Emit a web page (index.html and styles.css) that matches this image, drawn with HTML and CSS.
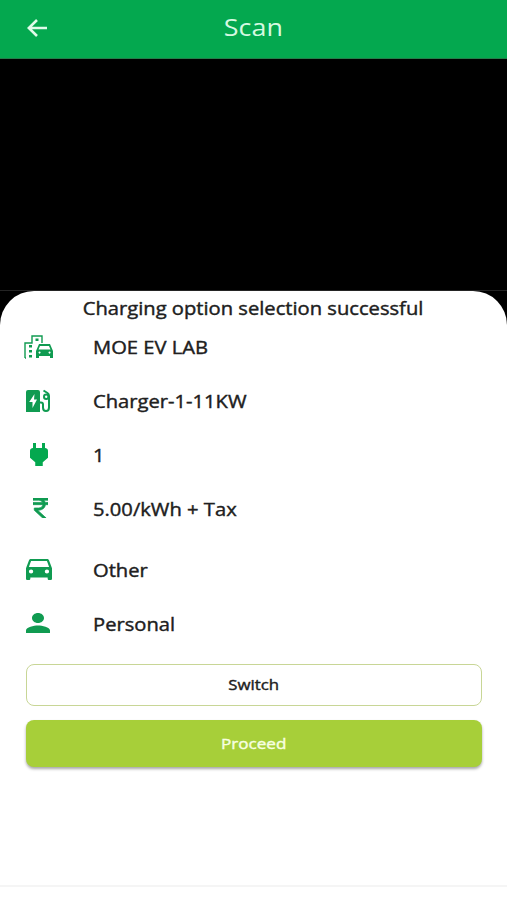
FILE: index.html
```html
<!DOCTYPE html>
<html lang="en">
<head>
<meta charset="utf-8">
<title>Scan</title>
<link rel="stylesheet" href="styles.css">
</head>
<body>
<div class="screen">
  <header class="bar">
    <svg class="back" viewBox="0 0 21 18"><path d="M20 9H2M10 1L1.8 9L10 17"/></svg>
    <h1 class="wide">Scan</h1>
  </header>
  <div class="camera"></div>
  <main class="sheet">
    <h2><span class="wide">Charging option selection successful</span></h2>
    <ul class="details">
      <li>
        <svg class="icon station" viewBox="0 0 29 24" preserveAspectRatio="none">
          <path class="line" d="M1 23V8H8V1H18V8M1 23H2"/>
          <path d="M5 10h3v2.6H5zM5 15h3v2.6H5zM5 20h3v2.6H5zM11.5 3.5h3v2.5h-3z"/>
          <path fill-rule="evenodd" d="M15 9H26L29 16V23H26V21H15V23H12V16ZM16 11L14.5 14.5H26.5L25 11ZM15.5 16.5a1 1 0 1 0 .1 0ZM25.5 16.5a1 1 0 1 0 .1 0Z"/>
        </svg>
        <span class="wide">MOE EV LAB</span>
      </li>
      <li>
        <svg class="icon charger" viewBox="0 0 25 24" preserveAspectRatio="none">
          <path fill-rule="evenodd" d="M2 1H12Q14 1 14 3V23H0V3Q0 1 2 1ZM8.5 5L3.2 13H6.5V19L11 10.5H8Z"/>
          <path class="hose" d="M14 13.5H15Q17 13.5 17 15.5V18.5Q17 22 20 22T23 18.5V7Q23 5 21.5 4L17.5 1.5"/>
          <circle class="hose" cx="20.2" cy="7.8" r="2.2"/>
        </svg>
        <span class="wide">Charger-1-11KW</span>
      </li>
      <li>
        <svg class="icon plug" viewBox="6 3 12 18" preserveAspectRatio="none"><path d="M16.01 7L16 3h-2v4h-4V3H8v4h-.01C7 6.99 6 7.99 6 8.99v5.49L9.5 18v3h5v-3l3.5-3.51v-5.5c0-1-1-2-1.99-1.99z"/></svg>
        <span class="wide">1</span>
      </li>
      <li>
        <svg class="icon rupee" viewBox="6 3 12 18" preserveAspectRatio="none"><path d="M13.66 7C13.1 5.82 11.9 5 10.5 5H6V3h12v2h-3.26c.48.58.84 1.26 1.05 2H18v2h-2.02c-.25 2.8-2.61 5-5.48 5h-.73l6.73 7h-2.77L7 14v-2h3.5c1.76 0 3.22-1.3 3.46-3H6V7h7.66z"/></svg>
        <span class="wide">5.00/kWh + Tax</span>
      </li>
      <li class="vehicle">
        <svg class="icon car" viewBox="3 5 18 16" preserveAspectRatio="none"><path fill-rule="evenodd" d="M18.92 6.01C18.72 5.42 18.16 5 17.5 5h-11c-.66 0-1.21.42-1.42 1.01L3 12v8c0 .55.45 1 1 1h1c.55 0 1-.45 1-1v-1h12v1c0 .55.45 1 1 1h1c.55 0 1-.45 1-1v-8l-2.08-5.99zM6.5 16a1.5 1.5 0 1 1 0-3 1.5 1.5 0 0 1 0 3zM17.5 16a1.5 1.5 0 1 1 0-3 1.5 1.5 0 0 1 0 3zM5 11l1.5-4.5h11L19 11H5z"/></svg>
        <span class="wide">Other</span>
      </li>
      <li>
        <svg class="icon person" viewBox="4 4 16 16" preserveAspectRatio="none"><path d="M12 12c2.21 0 4-1.79 4-4s-1.79-4-4-4-4 1.79-4 4 1.79 4 4 4zm0 2c-2.67 0-8 1.34-8 4v2h16v-2c0-2.66-5.33-4-8-4z"/></svg>
        <span class="wide">Personal</span>
      </li>
    </ul>
    <div class="actions">
      <button class="switch"><span class="wide">Switch</span></button>
      <button class="proceed"><span class="wide">Proceed</span></button>
    </div>
  </main>
  <footer class="foot"></footer>
</div>
</body>
</html>
```
FILE: styles.css
```css
* { box-sizing: border-box; }
body { margin: 0; background: #000; font-family: "Open Sans", sans-serif; color: #202020; }
.screen { height: 900px; display: flex; flex-direction: column; overflow: hidden; }
.wide { display: inline-block; transform: scaleX(1.12); white-space: nowrap; }
.bar { height: 59px; flex: none; background: #04a84f; border-bottom: 1px solid #237d4a; display: grid; grid-template-columns: 74px 1fr 74px; align-items: center; padding-bottom: 3px; }
.back { width: 21px; height: 18px; margin-left: 27px; fill: none; stroke: #e0fbea; stroke-width: 2.6; }
.bar h1 { margin: 0 0 1px; font-size: 24px; line-height: 34px; font-weight: 400; color: #d5f9e1; justify-self: center; }
.camera { height: 232px; flex: none; border-bottom: 1px solid #242424; }
.sheet { flex: 1; background: #fff; border-radius: 34px 34px 0 0; }
h2, .details, button { -webkit-text-stroke: .4px currentColor; }
h2 { margin: 0; height: 29px; text-align: center; font-size: 18px; line-height: 34px; font-weight: 500; }
.details { list-style: none; margin: 0; padding: 0; font-size: 18px; font-weight: 500; }
.details li { height: 54px; display: grid; grid-template-columns: 77px 1fr; align-items: center; }
.details .wide { justify-self: start; margin-left: 16px; transform-origin: left; }
.details .vehicle { margin-top: 7px; }
.icon { fill: #109b51; justify-self: center; }
.station { width: 29px; height: 24px; }
.station .line { fill: none; stroke: #109b51; stroke-width: 1.4; }
.charger { width: 25px; height: 24px; }
.hose { fill: none; stroke: #109b51; stroke-width: 2; }
.plug { width: 18px; height: 23px; margin-bottom: 2px; fill: #04a84f; }
.rupee { width: 15px; height: 20px; margin: 0 0 2px 4px; stroke: #109b51; stroke-width: .6; }
.car { width: 26px; height: 21px; margin-bottom: 2px; }
.person { width: 24px; height: 20px; margin: 0 1px 2px 0; }
.actions { margin: 13px 25px 0 26px; display: flex; flex-direction: column; gap: 14px; }
button { padding: 0 0 2px; font: 500 15px/20px "Open Sans", sans-serif; border-radius: 8px; }
.switch { height: 42px; border: 1.5px solid #c8d696; background: #fff; color: #202020; }
.proceed { height: 47px; border: 0; background: #a7cf39; color: #f7ffe0; box-shadow: 0 2px 3px rgba(0, 0, 0, .35); }
.proceed .wide { transform: scaleX(1.14); }
.foot { height: 15px; flex: none; background: #fff; border-top: 2px solid #f5f5f5; }
```
